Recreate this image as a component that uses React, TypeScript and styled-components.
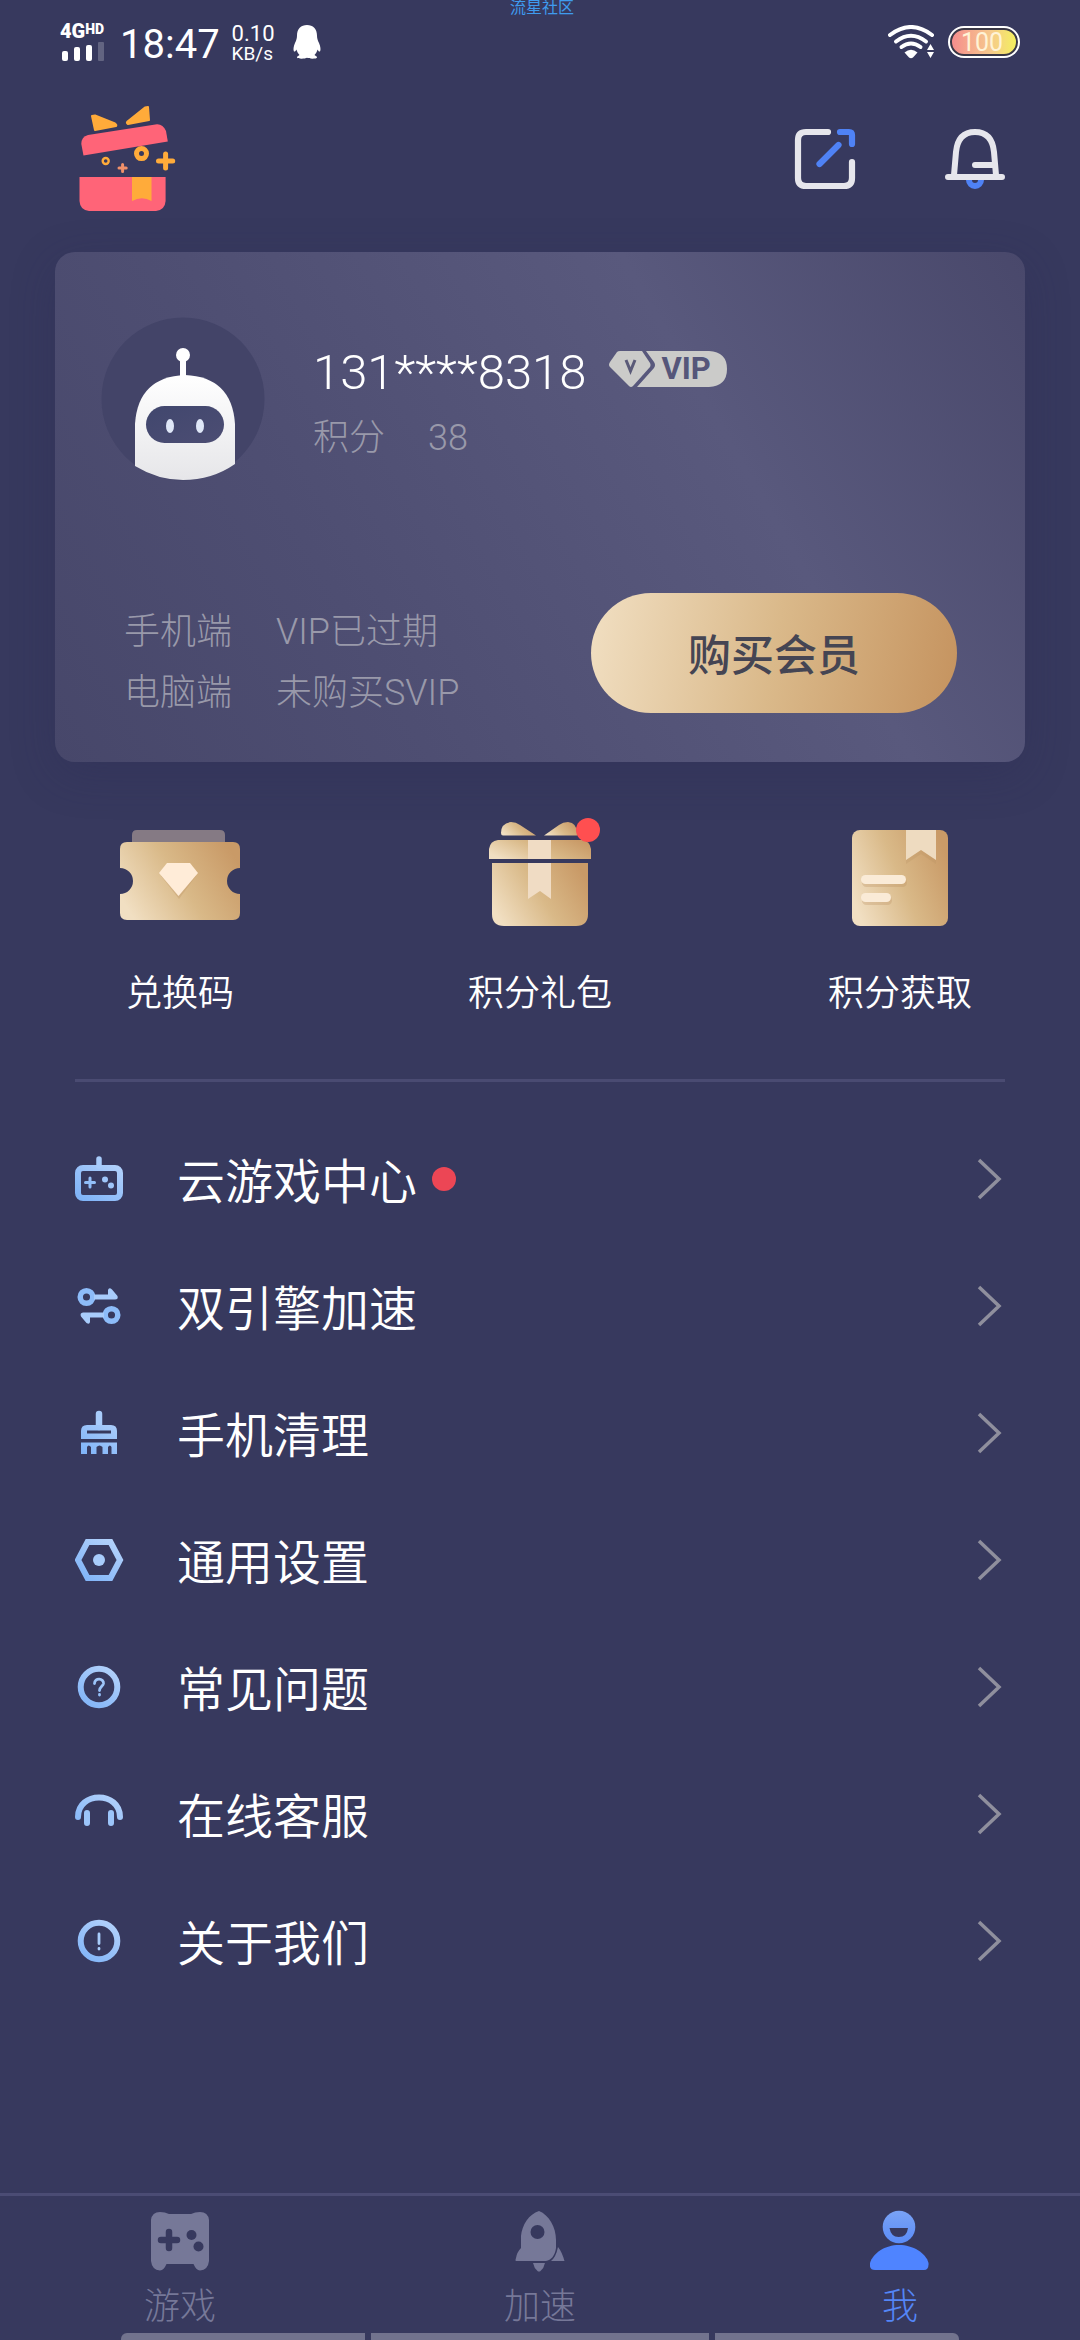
import React from 'react';
import styled, { createGlobalStyle } from 'styled-components';

const Global = createGlobalStyle`
  *, *::before, *::after { box-sizing: border-box; }
  html, body { margin: 0; background: #37395e; }
  body { font-family: Roboto, "Noto Sans CJK SC", sans-serif; color: #fff; }
  button, a { font: inherit; color: inherit; background: none; border: 0; padding: 0; text-decoration: none; cursor: pointer; }
  svg { display: block; flex: none; }
`;

const Screen = styled.div`
  min-height: 100vh;
  display: flex;
  flex-direction: column;
  background: #37395e;
`;

const Watermark = styled.div`
  position: absolute;
  top: 0;
  left: 0;
  right: 0;
  padding-left: 4px;
  text-align: center;
  font-size: 16px;
  line-height: 16px;
  color: #3f9bee;
`;

const StatusBar = styled.div`
  display: flex;
  justify-content: space-between;
  align-items: center;
  height: 84px;
  padding: 0 60px;
`;

const StatusGroup = styled.div<{ $gap: number }>`
  display: flex;
  align-items: center;
  gap: ${(p) => p.$gap}px;
`;

const Signal = styled.div`
  display: flex;
  flex-direction: column;
  gap: 2px;
  width: 48px;
`;

const Network = styled.div`
  display: flex;
  align-items: flex-start;
  font-size: 20px;
  line-height: 18px;
  font-weight: 900;
`;

const Hd = styled.span`
  font-size: 14px;
  line-height: 14px;
`;

const Clock = styled.div`
  font-size: 40px;
  line-height: 48px;
  padding-top: 6px;
`;

const Speed = styled.div`
  font-size: 22px;
  line-height: 20px;
  padding: 4px 6px 0 0;
`;

const SpeedUnit = styled.div`
  font-size: 19px;
  line-height: 20px;
`;

const Battery = styled.div`
  width: 72px;
  height: 32px;
  padding: 2px;
  border-radius: 16px;
  background: #fff;
`;

const BatteryFill = styled.div`
  height: 28px;
  border: 2px solid #3a3846;
  border-radius: 14px;
  padding-right: 4px;
  background: linear-gradient(90deg, #f58d8d, #f6c98c 60%, #f4f05e);
  font-size: 25px;
  line-height: 26px;
  text-align: center;
  color: #fff3d6;
`;

const Header = styled.header`
  display: flex;
  align-items: center;
  justify-content: space-between;
  height: 168px;
  padding: 0 72px 18px 75px;
`;

const HeaderActions = styled.div`
  display: flex;
  gap: 84px;
`;

const Card = styled.section`
  margin: 0 55px;
  height: 510px;
  padding: 65px 68px 38px 46px;
  border-radius: 20px;
  display: flex;
  flex-direction: column;
  justify-content: space-between;
  background: linear-gradient(60deg, #47476a 0%, #4e4e72 30%, #59597d 68%, #49486b 100%);
  box-shadow: 0 12px 44px rgba(44, 44, 84, 0.3);
`;

const Profile = styled.div`
  display: flex;
  gap: 48px;
`;

const ProfileText = styled.div`
  display: flex;
  flex-direction: column;
  padding-top: 27px;
`;

const NameRow = styled.div`
  display: flex;
  align-items: flex-start;
  gap: 23px;
`;

const Phone = styled.h1`
  margin: 0;
  font-size: 49px;
  line-height: 58px;
  font-weight: 350;
`;

const VipBadge = styled.span`
  display: grid;
  align-items: center;
  width: 118px;
  height: 36px;
  margin-top: 7px;
  & > * { grid-area: 1 / 1; }
`;

const VipText = styled.span`
  padding-left: 52px;
  font-size: 31px;
  line-height: 36px;
  font-weight: 700;
  color: #55567a;
`;

const Points = styled.div`
  display: flex;
  gap: 43px;
  margin-top: 14px;
  font-size: 36px;
  line-height: 44px;
  font-weight: 300;
  color: #9999aa;
`;

const CardFoot = styled.div`
  display: flex;
  justify-content: space-between;
  align-items: flex-end;
`;

const Plans = styled.dl`
  margin: 0;
  padding-left: 23px;
  display: grid;
  grid-template-columns: auto auto;
  column-gap: 44px;
  font-size: 36px;
  line-height: 61px;
  font-weight: 300;
  color: #9999aa;
`;

const PlanName = styled.dt``;

const PlanState = styled.dd`
  margin: 0;
`;

const BuyButton = styled.button`
  && {
    width: 366px;
    height: 120px;
    margin-bottom: 11px;
    padding-top: 5px;
    border-radius: 60px;
    background: linear-gradient(100deg, #f1dfc2 0%, #dab98a 50%, #c5935f 100%);
    color: #454553;
    font-size: 43px;
    line-height: 60px;
    font-weight: 500;
  }
`;

const Shortcuts = styled.nav`
  display: grid;
  grid-template-columns: repeat(3, 1fr);
  padding-top: 52px;
`;

const Shortcut = styled.a`
  && {
    display: flex;
    flex-direction: column;
    align-items: center;
    gap: 41px;
    font-size: 36px;
    line-height: 54px;
    font-weight: 350;
  }
`;

const Divider = styled.hr`
  width: auto;
  height: 3px;
  margin: 58px 75px 33px;
  border: 0;
  background: #4a4b72;
`;

const Menu = styled.nav`
  display: flex;
  flex-direction: column;
`;

const MenuRow = styled.a`
  && {
    display: flex;
    align-items: center;
    height: 127px;
    padding: 0 75px;
    font-size: 48px;
    line-height: 64px;
    font-weight: 350;
  }
`;

const MenuLabel = styled.span`
  padding: 8px 0 0 52px;
  flex: none;
`;

const MenuEnd = styled.span`
  display: flex;
  flex: 1;
  justify-content: flex-end;
`;

const Dot = styled.span`
  width: 24px;
  height: 24px;
  margin-left: 15px;
  border-radius: 50%;
  background: #ec4655;
`;

const TabBar = styled.nav`
  margin-top: auto;
  display: grid;
  grid-template-columns: repeat(3, 1fr);
  border-top: 3px solid #4b4c74;
  padding-top: 12px;
  height: 140px;
`;

const Tab = styled.a<{ $active?: boolean }>`
  && {
    display: flex;
    flex-direction: column;
    align-items: center;
    gap: 8px;
    font-size: 36px;
    line-height: 54px;
    font-weight: 300;
    color: ${(p) => (p.$active ? '#5486f7' : '#767898')};
  }
`;

const GestureBar = styled.div`
  display: grid;
  grid-template-columns: 244fr 338fr 244fr;
  gap: 6px;
  height: 7px;
  margin: 0 121px;
`;

const Gesture = styled.span`
  background: #72738e;
  &:first-child { border-top-left-radius: 6px; }
  &:last-child { border-top-right-radius: 6px; }
`;

const SignalBars = () => (
  <svg width="48" height="20" viewBox="60 38 48 20">
    <g fill="#fff">
      <rect x="62" y="47" width="6" height="10" rx="2" />
      <rect x="74" y="43" width="6" height="14" rx="2" />
      <rect x="86" y="41" width="6" height="16" rx="2" />
      <rect x="98" y="38" width="6" height="19" rx="1" opacity=".22" />
    </g>
  </svg>
);

const Penguin = () => (
  <svg width="28" height="34" viewBox="0 0 28 34">
    <path fill="#fff" d="M14 0C20 0 24 4 24 10.500C24 13 24.500 15 26 18C27.500 21.500 28 25 27 26.500C26 27 25 25.500 24.500 24.500C24 26.500 23 28.500 21.500 30C23 31 24 31.500 24 32.500C24 34 16 34 14 32.800C12 34 4 34 4 32.500C4 31.500 5 31 6.500 30C5 28.500 4 26.500 3.500 24.500C3 25.500 2 27 1 26.500C0 25 .5 21.500 2 18C3.500 15 4 13 4 10.500C4 4 8 0 14 0Z" />
  </svg>
);

const Wifi = () => (
  <svg width="47" height="34" viewBox="888 25 47 34">
    <g fill="none" stroke="#fff" strokeWidth="4" strokeLinecap="round">
      <path d="M890 35Q911 19 932 35" />
      <path d="M896 41.500Q911 30 926 41.500" />
      <path d="M901.500 47Q911 40 920.500 47" />
    </g>
    <path fill="#fff" d="M904.500 52.500Q911 47 917.500 52.500L913 57.500Q911 59 909 57.500Z" />
    <path fill="#fff" d="M930.500 44L934 50H927ZM930.500 58L934 52H927Z" />
  </svg>
);

const GiftLogo = () => (
  <svg width="105" height="114" viewBox="75 102 105 114">
    <g fill="#ffab3a" stroke="#ffab3a" strokeWidth="2" strokeLinejoin="round">
      <path d="M92 116L95 130L116 126Q117 125 115 123.500L95 115.500Z" />
      <path d="M148 107L149 120L128 124Q126 123 127.500 121.500L145 107.500Z" />
    </g>
    <path fill="#ff6478" d="M83.500 155.500L81.300 144Q81.500 136.500 88 135L157 124.200Q163 124 166 131L167.800 141.500Z" />
    <g fill="none" stroke="#ffab3a">
      <circle cx="141.500" cy="153.600" r="5" strokeWidth="5" />
      <circle cx="105.700" cy="161" r="3" strokeWidth="2.400" />
      <path d="M165.600 154V168M158.500 161H172.700" strokeWidth="5" strokeLinecap="round" />
      <path d="M122.600 164.500V171.500M119 168H126.200" strokeWidth="3" strokeLinecap="round" stroke="#f0906a" />
    </g>
    <path fill="#ff6478" d="M79.500 177H165.600V201Q165 210 156 211H89Q80 210 79.500 201Z" />
    <path fill="#ffab3a" d="M132 177H151.500V201Q142 195.500 132 201Z" />
  </svg>
);

const ShareIcon = () => (
  <svg width="66" height="66" viewBox="792 126 66 66">
    <g fill="none" strokeWidth="6.200" strokeLinecap="round" strokeLinejoin="round">
      <path stroke="#e6e6ec" d="M828 132H806Q798 132 798 140V178Q798 186 806 186H844Q852 186 852 178V162" />
      <path stroke="#4f82f5" d="M840 132H849Q852 132 852 135V144M819.500 164L838.500 145" />
    </g>
  </svg>
);

const BellIcon = () => (
  <svg width="66" height="66" viewBox="942 126 66 66">
    <circle cx="975" cy="180" r="6" fill="none" stroke="#4f82f5" strokeWidth="6" />
    <path fill="#37395e" d="M955 160H995V176H955Z" />
    <g fill="none" stroke="#e6e6ec" strokeWidth="6" strokeLinecap="round" strokeLinejoin="round">
      <path d="M954 175L956 152Q958 132 975 132Q992 132 994 152L996 175M975 165H994M948 177H1002" />
    </g>
  </svg>
);

const Robot = () => (
  <svg width="164" height="164" viewBox="101 317 164 164">
    <defs>
      <linearGradient id="shell" x1="0" y1="0" x2="0" y2="1">
        <stop offset="0" stopColor="#fff" />
        <stop offset="1" stopColor="#e6e6e9" />
      </linearGradient>
      <linearGradient id="visor" x1="0" y1="0" x2="1" y2="1">
        <stop offset="0" stopColor="#41476e" />
        <stop offset="1" stopColor="#4c4d73" />
      </linearGradient>
    </defs>
    <circle cx="183" cy="399" r="81.500" fill="#434468" />
    <rect x="180" y="358" width="6" height="22" fill="#fff" />
    <circle cx="183" cy="355" r="7" fill="#fff" />
    <path fill="url(#shell)" d="M135 466V424Q138 377 185 375Q232 377 235 424V464Q212 480 183 480Q158 480 135 466Z" />
    <rect x="146" y="406" width="78" height="37" rx="18.500" fill="url(#visor)" />
    <ellipse cx="170" cy="426" rx="4" ry="7" fill="#dfe7f7" />
    <ellipse cx="200" cy="426" rx="4" ry="7" fill="#dfe7f7" />
  </svg>
);

const BadgeShape = () => (
  <svg width="118" height="36" viewBox="0 0 118 36">
    <path fill="#cbcbc9" d="M8 1Q9 0 11 0H33L41 12Q42 14 41 16L24 35Q22 37 20 35L1 16Q-1 14 1 11Z" />
    <path fill="#cbcbc9" d="M37 0H100Q118 1 118 18Q118 35 100 36H28L45 17Q47 14 45 11Z" />
    <path fill="none" stroke="#5a5a78" strokeWidth="3" d="M17 9L21.500 20L26 9" />
  </svg>
);

const Gold = ({ id }: { id: string }) => (
  <defs>
    <linearGradient id={id} x1="0" y1=".7" x2="1" y2=".3">
      <stop offset="0" stopColor="#f1dfc2" />
      <stop offset=".5" stopColor="#d9b988" />
      <stop offset="1" stopColor="#c99a67" />
    </linearGradient>
  </defs>
);

const TicketIcon = () => (
  <svg width="126" height="112" viewBox="117 814 126 112">
    <Gold id="ticket" />
    <path fill="#857a84" d="M132 842V835Q132 830 137 830H220Q225 830 225 835V842Z" />
    <path fill="url(#ticket)" d="M120 868V849Q120 842 127 842H233Q240 842 240 849V868A13 13 0 0 0 240 894V913Q240 920 233 920H127Q120 920 120 913V894A13 13 0 0 0 120 868Z" />
    <path fill="#b98f60" opacity=".3" d="M161 876H196L179 899Z" />
    <path fill="#ffecd8" d="M167 863H190L198 873L178.500 896L159 873Z" />
  </svg>
);

const PackIcon = () => (
  <svg width="126" height="112" viewBox="477 814 126 112">
    <Gold id="pack" />
    <g fill="url(#pack)">
      <path d="M501 833Q501 823 511 822Q516 822 520 825L536 835.500H503Q501 835.500 501 833Z" />
      <path d="M577 833Q577 823 568 822Q563 822 559 825L544 835.500H577Z" />
      <path d="M489 859V849Q490 841 498 840H582Q590 841 591 849V859Z" />
      <path d="M492 863H588V914Q588 926 576 926H504Q492 926 492 914Z" />
    </g>
    <path fill="#f0dcc4" d="M528 840H551V859H528ZM528 863H551V899L540 891L528 899Z" />
    <circle cx="588" cy="830" r="12" fill="#ff4f50" />
  </svg>
);

const BoxIcon = () => (
  <svg width="126" height="112" viewBox="837 814 126 112">
    <Gold id="box" />
    <rect x="852" y="830" width="96" height="96" rx="8" fill="url(#box)" />
    <path fill="#b98f60" opacity=".25" d="M906 832H936V864L921 854L906 864Z" />
    <path fill="#eedbc0" d="M906 830H936V860L921 850L906 860Z" />
    <rect x="862" y="878" width="45" height="9" rx="4.500" fill="#b98f60" opacity=".3" />
    <rect x="861" y="875" width="45" height="9" rx="4.500" fill="#faebd7" />
    <rect x="862" y="896" width="30" height="9" rx="4.500" fill="#b98f60" opacity=".3" />
    <rect x="861" y="893" width="30" height="9" rx="4.500" fill="#faebd7" />
  </svg>
);

const Blue = ({ children }: { children: React.ReactNode }) => (
  <svg width="50" height="50" viewBox="0 0 50 50" aria-hidden="true">
    <defs>
      <linearGradient id="blue" gradientUnits="userSpaceOnUse" x1="38" y1="4" x2="10" y2="46">
        <stop offset="0" stopColor="#b4d2fb" />
        <stop offset="1" stopColor="#80b4f8" />
      </linearGradient>
    </defs>
    {children}
  </svg>
);

const line = { fill: 'none', stroke: 'url(#blue)', strokeLinecap: 'round', strokeLinejoin: 'round' } as const;

const RowGame = () => (
  <Blue>
    <rect x="3" y="14" width="42" height="30" rx="5" {...line} strokeWidth="6" />
    <path d="M24 5V12" stroke="#a8ccfb" strokeWidth="5.500" strokeLinecap="round" />
    <path d="M15 24V33M10.500 28.500H19.500" {...line} strokeWidth="3" />
    <circle cx="30" cy="25.500" r="3" fill="#9fc6fa" />
    <circle cx="36" cy="31.500" r="3" fill="#9fc6fa" />
  </Blue>
);

const RowEngine = () => (
  <Blue>
    <circle cx="11.500" cy="16" r="6.300" fill="none" stroke="#8dbcf9" strokeWidth="5.500" />
    <path fill="#a8ccfb" d="M19 13.500H33V9Q34 6 37 8.500L42.500 15Q43.500 18.500 40 18.500H19Z" />
    <circle cx="36.500" cy="34" r="6.300" fill="none" stroke="#8dbcf9" strokeWidth="5.500" />
    <path fill="#a8ccfb" d="M29 31.500H8Q4.500 32 6 35.500L11.500 42Q14.500 44 15 41V36.500H29Z" />
  </Blue>
);

const RowClean = () => (
  <Blue>
    <path d="M24 6V19" stroke="#a8ccfb" strokeWidth="6.500" strokeLinecap="round" />
    <path fill="url(#blue)" fillRule="evenodd" d="M6 31V23Q6 17 12 17H36Q42 17 42 23V31ZM12 22.500V25.500H36V22.500Z" />
    <path fill="url(#blue)" d="M6 34.500H42V46H36.500V39Q35 36 33 39V46H27.500V39Q24.500 36 21.500 39V46H16V39Q13.500 36 12 39V46H6Z" />
  </Blue>
);

const RowSettings = () => (
  <Blue>
    <path d="M12.500 7H35.500L45 25L35.500 43H12.500L3 25Z" {...line} strokeWidth="6" strokeLinejoin="miter" />
    <circle cx="24" cy="25" r="6" fill="#a8ccfb" />
  </Blue>
);

const RowHelp = () => (
  <Blue>
    <circle cx="24" cy="25" r="18.300" {...line} strokeWidth="6" />
    <path d="M19.500 21.500C19.500 15.500 29 16 28.500 21.500C28 24.500 24.500 25 24.500 28.500M24.500 32.500V33" {...line} strokeWidth="2.800" />
  </Blue>
);

const RowService = () => (
  <Blue>
    <path d="M3 28C3 2 45 2 45 28" {...line} strokeWidth="6" />
    <path d="M12 24V34M36 24V34" stroke="#9cc5fa" strokeWidth="6" strokeLinecap="round" />
  </Blue>
);

const RowAbout = () => (
  <Blue>
    <circle cx="24" cy="25" r="18.300" {...line} strokeWidth="6" />
    <path d="M24 18V27.500M24 32.500V33" stroke="#a8ccfb" strokeWidth="2.800" strokeLinecap="round" />
  </Blue>
);

const Chevron = () => (
  <svg width="30" height="44" viewBox="0 0 30 44" aria-hidden="true">
    <path d="M4 3L24 22L4 41" fill="none" stroke="#8f8f9d" strokeWidth="3.500" />
  </svg>
);

const TabGame = () => (
  <svg width="60" height="64" viewBox="150 2208 60 64">
    <path fill="#767898" fillRule="evenodd" d="M151 2220Q152 2212 160 2212Q165 2212 169 2214H191Q195 2212 200 2212Q208 2212 209 2220V2261Q208 2270 200 2270.500Q196 2270 193.500 2264H166.500Q164 2270 160 2270.500Q152 2270 151 2261Z" />
    <path d="M169 2232V2248M161 2240H177" stroke="#37395e" strokeWidth="6.500" strokeLinecap="round" />
    <circle cx="191.500" cy="2235" r="5" fill="#37395e" />
    <circle cx="198.500" cy="2246.500" r="5" fill="#37395e" />
  </svg>
);

const TabRocket = () => (
  <svg width="60" height="64" viewBox="511 2208 60 64">
    <g fill="#767898">
      <path d="M540 2211C550 2215 557 2227 557 2240V2248C556 2256 552 2260 547 2261H517Q516 2261 517 2258Q518 2252 522 2248V2236C523 2225 530 2214 540 2211Z" />
      <path d="M559 2247Q563 2252 565.500 2261H552Q557 2257 559 2247Z" />
      <path d="M534 2263H546Q545 2268 541.500 2271Q540 2272 538.500 2271Q535 2268 534 2263Z" />
    </g>
    <circle cx="538.500" cy="2232" r="7" fill="#37395e" />
  </svg>
);

const TabMe = () => (
  <svg width="60" height="64" viewBox="871 2208 60 64">
    <defs>
      <linearGradient id="me" x1="0" y1="0" x2="0" y2="1">
        <stop offset="0" stopColor="#7aa3f5" />
        <stop offset="1" stopColor="#5a8cf8" />
      </linearGradient>
    </defs>
    <circle cx="900" cy="2227" r="16.300" fill="url(#me)" />
    <path fill="#37395e" d="M890.500 2228H909Q908 2237 899.700 2237Q892 2237 890.500 2228Z" />
    <path fill="#4f84ff" d="M900 2245C914 2245 927 2253 929.500 2263Q930 2270 925 2270H876Q870 2270 871 2263C874 2253 886 2245 900 2245Z" />
  </svg>
);

const rows = [
  { label: '云游戏中心', Icon: RowGame, dot: true },
  { label: '双引擎加速', Icon: RowEngine },
  { label: '手机清理', Icon: RowClean },
  { label: '通用设置', Icon: RowSettings },
  { label: '常见问题', Icon: RowHelp },
  { label: '在线客服', Icon: RowService },
  { label: '关于我们', Icon: RowAbout },
];

const shortcuts = [
  { label: '兑换码', Icon: TicketIcon },
  { label: '积分礼包', Icon: PackIcon },
  { label: '积分获取', Icon: BoxIcon },
];

const tabs = [
  { label: '游戏', Icon: TabGame },
  { label: '加速', Icon: TabRocket },
  { label: '我', Icon: TabMe, active: true },
];

export default function App() {
  return (
    <>
      <Global />
      <Screen>
        <Watermark>流星社区</Watermark>
        <StatusBar>
          <StatusGroup $gap={12}>
            <Signal>
              <Network>4G<Hd>HD</Hd></Network>
              <SignalBars />
            </Signal>
            <Clock>18:47</Clock>
            <Speed>0.10<SpeedUnit>KB/s</SpeedUnit></Speed>
            <Penguin />
          </StatusGroup>
          <StatusGroup $gap={13}>
            <Wifi />
            <Battery><BatteryFill>100</BatteryFill></Battery>
          </StatusGroup>
        </StatusBar>
        <Header>
          <button aria-label="礼物"><GiftLogo /></button>
          <HeaderActions>
            <button aria-label="分享"><ShareIcon /></button>
            <button aria-label="通知"><BellIcon /></button>
          </HeaderActions>
        </Header>
        <Card>
          <Profile>
            <Robot />
            <ProfileText>
              <NameRow>
                <Phone>131****8318</Phone>
                <VipBadge><BadgeShape /><VipText>VIP</VipText></VipBadge>
              </NameRow>
              <Points><span>积分</span><span>38</span></Points>
            </ProfileText>
          </Profile>
          <CardFoot>
            <Plans>
              <PlanName>手机端</PlanName><PlanState>VIP已过期</PlanState>
              <PlanName>电脑端</PlanName><PlanState>未购买SVIP</PlanState>
            </Plans>
            <BuyButton>购买会员</BuyButton>
          </CardFoot>
        </Card>
        <Shortcuts>
          {shortcuts.map(({ label, Icon }) => (
            <Shortcut href="#" key={label}><Icon />{label}</Shortcut>
          ))}
        </Shortcuts>
        <Divider />
        <Menu>
          {rows.map(({ label, Icon, dot }) => (
            <MenuRow href="#" key={label}>
              <Icon />
              <MenuLabel>{label}</MenuLabel>
              {dot && <Dot />}
              <MenuEnd><Chevron /></MenuEnd>
            </MenuRow>
          ))}
        </Menu>
        <TabBar>
          {tabs.map(({ label, Icon, active }) => (
            <Tab href="#" key={label} $active={active}><Icon />{label}</Tab>
          ))}
        </TabBar>
        <GestureBar><Gesture /><Gesture /><Gesture /></GestureBar>
      </Screen>
    </>
  );
}
